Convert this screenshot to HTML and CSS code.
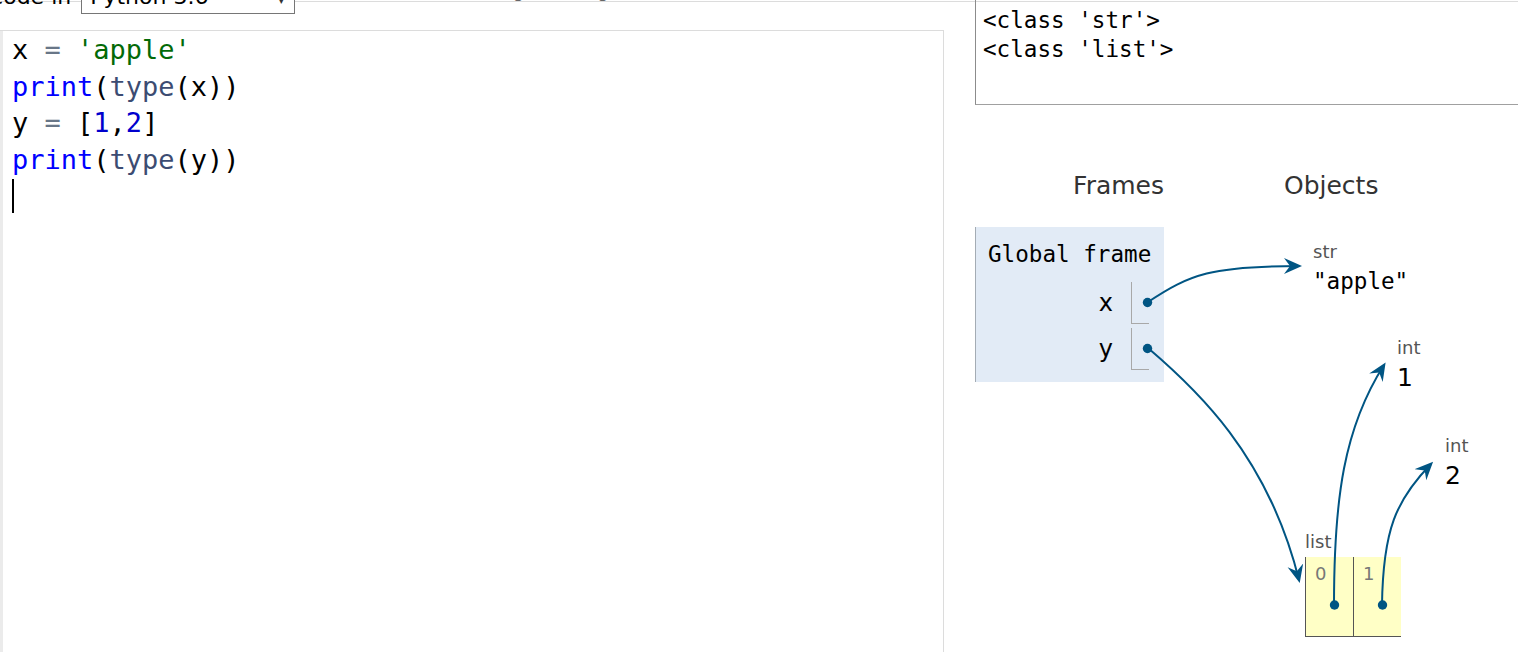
FILE: index.html
```html
<!DOCTYPE html>
<html>
<head>
<meta charset="utf-8">
<title>Python Tutor</title>
<link rel="stylesheet" href="styles.css">
</head>
<body>
<main class="page">
  <section class="left">
    <div class="toolbar">
      <span class="lang-label">Write code in</span>
      <span class="select"><span class="select-text">Python 3.6</span><span class="caret">▾</span></span>
      <span class="hint">(drag lower right corner to resize code editor)</span>
    </div>
    <div class="editor">
      <div class="gutter"></div>
      <pre class="code"><span class="id">x</span> <span class="op">=</span> <span class="str">'apple'</span>
<span class="kw">print</span><span class="par">(</span><span class="fn">type</span><span class="par">(</span>x<span class="par">))</span>
<span class="id">y</span> <span class="op">=</span> <span class="par">[</span><span class="num">1</span>,<span class="num">2</span><span class="par">]</span>
<span class="kw">print</span><span class="par">(</span><span class="fn">type</span><span class="par">(</span>y<span class="par">))</span>
<span class="cursor"></span></pre>
    </div>
  </section>
  <section class="right">
    <div class="output"><pre class="output-text">&lt;class 'str'&gt;
&lt;class 'list'&gt;</pre></div>
    <div class="viz">
      <div class="headings">
        <span class="heading frames-heading">Frames</span>
        <span class="heading objects-heading">Objects</span>
      </div>
      <div class="frame">
        <div class="frame-title">Global frame</div>
        <div class="var-row"><span class="var-name">x</span><span class="var-cell"></span></div>
        <div class="var-row"><span class="var-name">y</span><span class="var-cell"></span></div>
      </div>

      <div class="heapobj obj-str">
        <div class="typelabel">str</div>
        <div class="value mono">"apple"</div>
      </div>
      <div class="heapobj obj-int1">
        <div class="typelabel">int</div>
        <div class="value prim">1</div>
      </div>
      <div class="heapobj obj-int2">
        <div class="typelabel">int</div>
        <div class="value prim">2</div>
      </div>
      <div class="heapobj obj-list">
        <div class="typelabel">list</div>
        <div class="list-box">
          <div class="list-cell"><span class="list-idx">0</span></div>
          <div class="list-cell"><span class="list-idx">1</span></div>
        </div>
      </div>

      <svg class="arrows" width="543" height="547" viewBox="975 105 543 547" xmlns="http://www.w3.org/2000/svg">
        <defs>
          <marker id="ah" markerUnits="userSpaceOnUse" markerWidth="20" markerHeight="18" refX="15" refY="8" orient="auto">
            <path d="M0,0 L18,8 L0,16 L6,8 Z" fill="#005583"/>
          </marker>
        </defs>
        <g fill="none" stroke="#005583" stroke-width="2">
          <path d="M1148 302 C1190 274, 1212 266, 1299 266" marker-end="url(#ah)"/>
          <path d="M1148 348 C1195 388, 1268 455, 1299 580" marker-end="url(#ah)"/>
          <path d="M1334 605 C1334 498, 1344 428, 1384 365" marker-end="url(#ah)"/>
          <path d="M1382 605 C1383 530, 1396 500, 1431 464" marker-end="url(#ah)"/>
        </g>
        <g fill="#005583">
          <circle cx="1147.5" cy="302.5" r="4.7"/>
          <circle cx="1147.5" cy="348.5" r="4.7"/>
          <circle cx="1334.5" cy="605" r="4.7"/>
          <circle cx="1382.5" cy="605" r="4.7"/>
        </g>
      </svg>
    </div>
  </section>
</main>
</body>
</html>
```

FILE: styles.css
```css
html, body {
  margin: 0;
  padding: 0;
  background: #ffffff;
  overflow: hidden;
}

body {
  padding-top: 1px;
  font-family: "DejaVu Sans", Verdana, sans-serif;
  color: #000;
}

.page {
  display: flex;
  border-top: 1px solid #dcdcdc;
  width: 1518px;
  height: 650px;
}

/* ---------- left column ---------- */
.left {
  width: 944px;
  flex: none;
  display: flex;
  flex-direction: column;
}

.toolbar {
  display: flex;
  align-items: baseline;
  height: 47px;
  margin-top: -19px;
  margin-left: -74px;
  font-size: 22px;
  line-height: 26px;
  position: relative;
}

.lang-label {
  color: #000;
}

.select {
  margin-left: 10px;
  width: 214px;
  box-sizing: border-box;
  border: 1px solid #767676;
  background: #fff;
  padding: 0 10px 0 8px;
  display: flex;
  align-items: baseline;
  justify-content: space-between;
  line-height: 26px;
}

.caret {
  font-size: 12px;
  color: #333;
}

.hint {
  margin-left: 181px;
  font-size: 18px;
  color: #666;
  align-self: flex-start;
  margin-top: -5px;
}

.editor {
  flex: 1;
  display: flex;
  border-top: 1px solid #dcdcdc;
  border-right: 1px solid #dcdcdc;
  background: #fff;
}

.gutter {
  width: 3px;
  background: #ebebeb;
  flex: none;
}

.code {
  margin: 0;
  padding: 1px 0 0 9px;
  font-family: "DejaVu Sans Mono", monospace;
  font-size: 27px;
  line-height: 36.67px;
  color: #000;
}

.code .kw { color: #0000ff; }
.code .fn { color: #3c4c72; }
.code .str { color: #036a07; }
.code .num { color: #0000cd; }
.code .op { color: #687687; }
.code .par { color: #000; }

.cursor {
  display: inline-block;
  width: 2px;
  height: 34px;
  background: #000;
  vertical-align: top;
}

/* ---------- right column ---------- */
.right {
  margin-left: 31px;
  flex: 1;
  display: flex;
  flex-direction: column;
}

.output {
  box-sizing: border-box;
  height: 105px;
  margin-top: -2px;
  border-left: 1px solid #8c8c8c;
  border-bottom: 1px solid #a0a0a0;
  padding: 6px 0 0 7px;
}

.output-text {
  margin: 0;
  font-family: "DejaVu Sans Mono", monospace;
  font-size: 22.6px;
  line-height: 28.5px;
  color: #000;
}

.viz {
  position: relative;
  flex: 1;
  padding-top: 67px;
}

.headings {
  display: flex;
  height: 28px;
  line-height: 28px;
  font-size: 25px;
  color: #333;
}

.frames-heading {
  width: 189px;
  text-align: right;
}

.objects-heading {
  margin-left: 120px;
}

.frame {
  margin-top: 27px;
  width: 189px;
  box-sizing: border-box;
  background: #e2ebf6;
  border-left: 1px solid #a4acb4;
  padding: 13px 15px 12px 12px;
}

.frame-title {
  font-family: "DejaVu Sans Mono", monospace;
  font-size: 22.6px;
  line-height: 28px;
  margin-bottom: 14px;
  white-space: nowrap;
}

.var-row {
  display: flex;
  justify-content: flex-end;
  align-items: center;
  height: 42px;
}

.var-row + .var-row {
  margin-top: 4px;
}

.var-name {
  font-size: 24px;
  line-height: 28px;
  margin-right: 18px;
}

.var-cell {
  width: 18px;
  height: 42px;
  box-sizing: border-box;
  border-left: 1px solid #a8a8a8;
  border-bottom: 1px solid #a8a8a8;
}

/* heap objects placed on the diagram canvas */
.heapobj {
  position: absolute;
}

.typelabel {
  font-size: 18px;
  line-height: 20px;
  color: #555;
}

.value {
  margin-top: 6px;
  color: #000;
}

.value.mono {
  font-family: "DejaVu Sans Mono", monospace;
  font-size: 22.6px;
  line-height: 26px;
}

.value.prim {
  font-size: 25px;
  line-height: 28px;
}

.obj-str { left: 338px; top: 137px; }
.obj-int1 { left: 422px; top: 233px; }
.obj-int2 { left: 470px; top: 331px; }
.obj-list { left: 330px; top: 427px; }

.list-box {
  margin-top: 5px;
  display: flex;
  background: #ffffc6;
  width: 96px;
  height: 80px;
}

.list-cell {
  width: 48px;
  box-sizing: border-box;
  border-left: 1px solid #555;
  border-bottom: 1px solid #555;
  padding: 7px 0 0 9px;
}

.list-idx {
  font-size: 18px;
  line-height: 20px;
  color: #777;
}

.arrows {
  position: absolute;
  left: 0;
  top: 0;
  overflow: visible;
}
```
